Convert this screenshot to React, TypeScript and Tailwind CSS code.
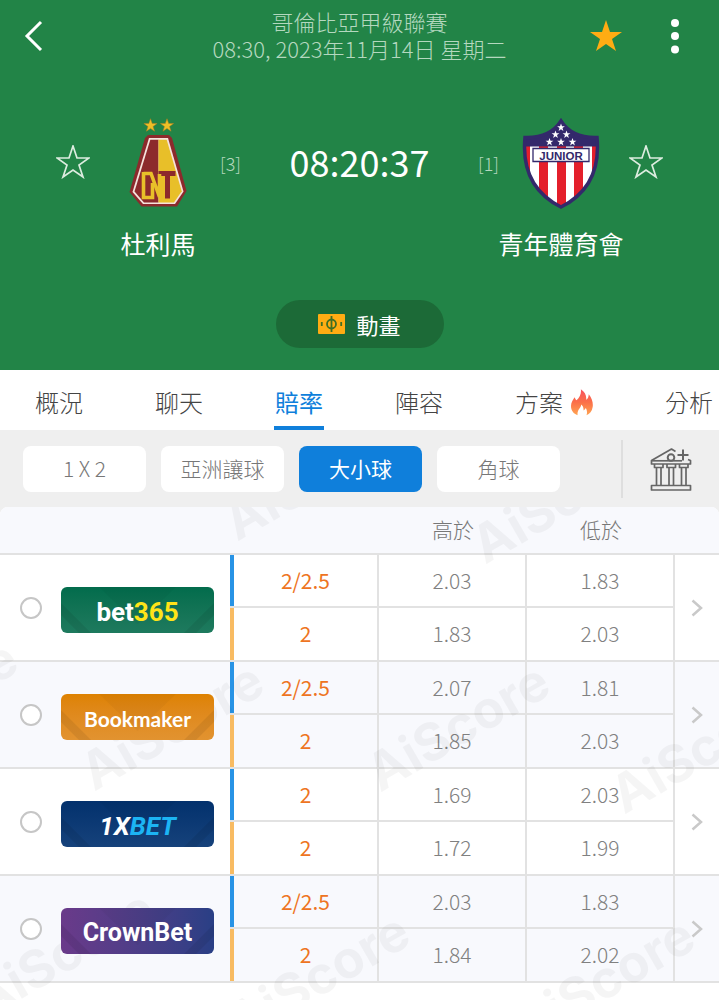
import { useState } from "react";

const STAR = "17,1 21,13 33,13 23,20 27,32 17,25 7,32 11,20 1,13 13,13";
const SMALL_STAR = "0,-4 1,-1.2 3.9,-1.2 1.5,0.6 2.4,3.4 0,1.7 -2.4,3.4 -1.5,0.6 -3.9,-1.2 -1,-1.2";

type Line = { spread: string; over: string; under: string };
type Bookmaker = { id: string; name: string; badge: string; lines: [Line, Line] };

const bookmakers: Bookmaker[] = [
  {
    id: "bet365",
    name: "bet365",
    badge: "bg-linear-to-b from-[#026c4c] to-[#1e7a5e]",
    lines: [
      { spread: "2/2.5", over: "2.03", under: "1.83" },
      { spread: "2", over: "1.83", under: "2.03" },
    ],
  },
  {
    id: "bookmaker",
    name: "Bookmaker",
    badge: "bg-linear-to-b from-[#de8200] to-[#e29330]",
    lines: [
      { spread: "2/2.5", over: "2.07", under: "1.81" },
      { spread: "2", over: "1.85", under: "2.03" },
    ],
  },
  {
    id: "1xbet",
    name: "1XBET",
    badge: "bg-linear-to-b from-[#03316d] to-[#16427b]",
    lines: [
      { spread: "2", over: "1.69", under: "2.03" },
      { spread: "2", over: "1.72", under: "1.99" },
    ],
  },
  {
    id: "crownbet",
    name: "CrownBet",
    badge: "bg-linear-to-r from-[#6a3a8a] to-[#293f85]",
    lines: [
      { spread: "2/2.5", over: "2.03", under: "1.83" },
      { spread: "2", over: "1.84", under: "2.02" },
    ],
  },
];

const tabs = ["概況", "聊天", "賠率", "陣容", "方案", "分析"];
const markets = ["1 X 2", "亞洲讓球", "大小球", "角球"];

const watermarks = [
  "left-[315px] top-[-31px]",
  "left-[563px] top-[-8px]",
  "left-[-74px] top-[197px]",
  "left-[172px] top-[219px]",
  "left-[458px] top-[220px]",
  "left-[702px] top-[242px]",
  "left-[63px] top-[447px]",
  "left-[318px] top-[470px]",
  "left-[603px] top-[474px]",
];

function FavouriteStar({ label }: { label: string }) {
  return (
    <button type="button" aria-label={label} className="mt-7 size-[34px] shrink-0">
      <svg viewBox="0 0 34 34" className="size-full" fill="none" stroke="#dcecdf" strokeWidth="1.7">
        <polygon points={STAR} />
      </svg>
    </button>
  );
}

function TolimaCrest() {
  return (
    <svg viewBox="0 0 60 92" className="h-[92px] w-[60px]" aria-hidden="true">
      <g fill="#eebf26" stroke="#b07a22" strokeWidth="0.3">
        <polygon transform="translate(22.5 8.5) scale(1.7)" points={SMALL_STAR} />
        <polygon transform="translate(39 8.5) scale(1.7)" points={SMALL_STAR} />
      </g>
      <path d="M20 18h21l3 3 14.5 53L49 89.500H13.500L1.500 75 17 21z" fill="#8c2a2c" />
      <path d="M21 21h19l15.500 53.500L47 87H15L4.500 75z" fill="#f6e3dc" />
      <path d="M22.300 22.700H30.500V85.5H16L6.500 74.500z" fill="#8c2a2c" />
      <path d="M30.500 22.700h8.200L53.700 74.300 46 85.500H30.500z" fill="#e8bf29" />
      <path d="M30.500 54H47.5V59H42V81.5H37V59H30.500z" fill="#8c2a2c" />
      <path d="M15.500 56.500H23L31.500 80V57" fill="none" stroke="#e8bf29" strokeWidth="3.600" />
      <path d="M15.500 55V80.500H24.500V66" fill="none" stroke="#e8bf29" strokeWidth="3.600" />
    </svg>
  );
}

function JuniorCrest() {
  const shield = "M40 4C47 15 60 21 76 20.500C79 52 68 76 40 90C12 76 1 52 4 20.500C20 21 33 15 40 4Z";
  return (
    <svg viewBox="0 0 80 92" className="h-[92px] w-20" aria-hidden="true">
      <defs>
        <clipPath id="junior-shield">
          <path d={shield} />
        </clipPath>
      </defs>
      <g clipPath="url(#junior-shield)">
        <path d="M0 0h80v92H0z" fill="#fff" />
        <path d="M0 29h9v63H0zM18 29h9v63h-9zM36 29h9v63h-9zM53 29h9v63h-9zM71 29h9v63h-9z" fill="#e41f2b" />
        <path d="M0 0h80v29.500H0z" fill="#33296b" />
      </g>
      <path d={shield} fill="none" stroke="#33296b" strokeWidth="3.5" />
      <path d="M12 31.500h56v13H12z" fill="#fff" stroke="#33296b" strokeWidth="1.3" />
      <text x="40" y="42.500" textAnchor="middle" fontSize="11.5" fontWeight="700" fill="#33296b" fontFamily="Liberation Sans, sans-serif">
        JUNIOR
      </text>
      <g fill="#fff">
        {[[40, 10.5], [34.5, 17.5], [45.5, 17.5], [28.5, 25], [40, 25], [51.5, 25]].map(([x, y]) => (
          <polygon key={`${x}-${y}`} transform={`translate(${x} ${y})`} points={SMALL_STAR} />
        ))}
      </g>
    </svg>
  );
}

function PitchIcon() {
  return (
    <svg viewBox="0 0 27 20" className="h-5 w-[27px]" aria-hidden="true">
      <rect width="27" height="20" rx="1" fill="#ffac13" />
      <g fill="none" stroke="#3f6f24" strokeWidth="1.800">
        <circle cx="13.500" cy="10" r="4.500" />
        <path d="M13.500 2v16M3.800 8v4M23.200 8v4" />
      </g>
    </svg>
  );
}

function FlameIcon() {
  return (
    <svg viewBox="0 0 67 80" className="h-[27px] w-[22px]" aria-hidden="true">
      <defs>
        <linearGradient id="flame" x1="0" y1="0" x2="0" y2="1">
          <stop offset="0" stopColor="#f8515f" />
          <stop offset="0.500" stopColor="#fb7049" />
          <stop offset="1" stopColor="#ffa552" />
        </linearGradient>
      </defs>
      <path
        fill="url(#flame)"
        d="M30 0C43 8 48 21 46 32C51 29 54 23 54 15C64 27 68 42 66 54C64 67 57 76 47 79C50 72 49 63 45 57C43 61 41 63 38 64C39 56 36 50 31 46C31 57 18 61 20 79C8 75 0 65 0 51C0 40 6 32 11 24C13 28 14 31 17 33C27 25 32 12 30 0Z"
      />
    </svg>
  );
}

function BankIcon() {
  return (
    <svg viewBox="0 0 42 44" className="h-11 w-[42px]" fill="none" stroke="#666" strokeWidth="1.700" strokeLinejoin="round" aria-hidden="true">
      <path d="M25.500 4.500L21.500 2 1.500 13.500V17h39v-3.500L38 12.500" />
      <path d="M1.500 13.800H32" />
      <circle cx="21" cy="10.500" r="3.300" strokeWidth="2" />
      <path d="M33 2.500v11M27.500 8h11" strokeWidth="2" />
      <path d="M1.500 38.500h39v4.500h-39zM4.500 17v3.500h8.500V17M17 17v3.500h8.500V17M29.500 17v3.500H38V17M6.500 20.500v18M11 20.500v18M19 20.500v18M23.500 20.500v18M31.500 20.500v18M36 20.500v18" />
    </svg>
  );
}

function BadgeLabel({ id }: { id: string }) {
  switch (id) {
    case "bet365":
      return (
        <span className="font-[Roboto] text-[26px] font-bold">
          bet<span className="text-[#ffe418]">365</span>
        </span>
      );
    case "bookmaker":
      return <span className="font-[Lato] text-[21px] font-bold">Bookmaker</span>;
    case "1xbet":
      return (
        <span className="font-[Roboto] text-[26px] font-bold italic">
          1X<span className="text-[#1cb4f4]">BET</span>
        </span>
      );
    default:
      return <span className="font-[Roboto] text-[25px] font-bold">CrownBet</span>;
  }
}

function OddsRows({
  item,
  shaded,
  selected,
  onSelect,
}: {
  item: Bookmaker;
  shaded: boolean;
  selected: boolean;
  onSelect: () => void;
}) {
  const line = "border-[#e2e2e2]";
  return (
    <tbody className={shaded ? "bg-[#f8f9fd]" : "bg-white"}>
      {item.lines.map((odds, i) => (
        <tr key={i} className={i === 0 ? "h-[53px]" : "h-[54px]"}>
          {i === 0 && (
            <td rowSpan={2} className={`border-b-2 ${line} p-0`}>
              <label className="relative z-10 flex items-center pl-5">
                <input
                  type="radio"
                  name="bookmaker"
                  checked={selected}
                  onChange={onSelect}
                  className="size-[22px] shrink-0 appearance-none rounded-full border-2 border-[#c6c6c6] bg-white checked:border-[#0f7fdb]"
                />
                <span className={`relative mt-1 ml-[19px] flex h-[46px] w-[153px] items-center justify-center overflow-hidden rounded-md pt-1 leading-none text-white ${item.badge}`}>
                  <svg viewBox="0 0 153 46" className="absolute inset-0 size-full" aria-hidden="true">
                    <path d="M0 16l30 30H18L0 28zM153 16l-30 30h12l18-18z" fill="#000" opacity="0.070" />
                    <path d="M38 0h77L76.500 37z" fill="#000" opacity="0.030" />
                  </svg>
                  <span className="relative">
                    <BadgeLabel id={item.id} />
                  </span>
                </span>
              </label>
            </td>
          )}
          <td className={`border-r-2 border-b-2 ${line} p-0 font-normal text-[#ee7422]`}>
            <div className={`flex items-center border-l-4 ${i === 0 ? "h-[51px] border-[#2893e5]" : "h-[52px] border-[#f8bb62]"}`}>
              <span className="flex-1 text-center">{odds.spread}</span>
            </div>
          </td>
          <td className={`border-r-2 border-b-2 ${line} p-0 text-center text-[#808080]`}>{odds.over}</td>
          <td className={`border-r-2 border-b-2 ${line} p-0 text-center text-[#808080]`}>{odds.under}</td>
          {i === 0 && (
            <td rowSpan={2} className={`border-b-2 ${line} p-0`}>
              <button type="button" aria-label={`${item.name} 詳情`} className="relative z-10 flex w-full justify-center py-4">
                <svg viewBox="0 0 12 18" className="h-[18px] w-3" fill="none" stroke="#c9c9c9" strokeWidth="2.500" aria-hidden="true">
                  <path d="M1.500 1.500L10 9l-8.500 7.500" />
                </svg>
              </button>
            </td>
          )}
        </tr>
      ))}
    </tbody>
  );
}

export default function App() {
  const [tab, setTab] = useState("賠率");
  const [market, setMarket] = useState("大小球");
  const [selected, setSelected] = useState("");

  return (
    <div className="flex min-h-screen flex-col overflow-x-hidden bg-white font-['Noto_Sans_CJK_TC',sans-serif] font-light">
      <header className="flex flex-col items-center bg-[#228447] pb-[22px] text-white">
        <div className="flex w-full items-start justify-between px-6">
          <div className="flex w-[110px] pt-[19px]">
            <button type="button" aria-label="返回">
              <svg viewBox="0 0 20 34" className="h-[34px] w-5" fill="none" stroke="#fff" strokeWidth="3" aria-hidden="true">
                <path d="M17 3L3 17l14 14" />
              </svg>
            </button>
          </div>
          <div className="pt-2 text-center text-[22px] leading-[27px] text-[#b4d8bf]">
            <h1>哥倫比亞甲級聯賽</h1>
            <p>08:30, 2023年11月14日 星期二</p>
          </div>
          <div className="flex w-[110px] items-start justify-end gap-11 pt-[19px] pr-3">
            <button type="button" aria-label="收藏賽事" className="size-[34px]">
              <svg viewBox="0 0 34 34" className="size-full" fill="#ffac13" aria-hidden="true">
                <polygon points={STAR} />
              </svg>
            </button>
            <button type="button" aria-label="更多">
              <svg viewBox="0 0 16 36" className="h-9 w-4" fill="#fff" aria-hidden="true">
                <circle cx="8" cy="4" r="4" />
                <circle cx="8" cy="17" r="4" />
                <circle cx="8" cy="30.500" r="4" />
              </svg>
            </button>
          </div>
        </div>

        <div className="mt-[55px] flex w-full items-start justify-between px-14">
          <div className="flex">
            <FavouriteStar label="收藏杜利馬" />
            <div className="ml-1.5 flex w-[124px] flex-col items-center">
              <TolimaCrest />
              <h2 className="mt-4 text-[25px] leading-9 font-normal whitespace-nowrap">杜利馬</h2>
            </div>
            <span className="mt-8 w-[21px] text-center text-lg text-[#b5d8bf]">[3]</span>
          </div>
          <time className="mt-[18px] text-[36px] leading-[52px] font-normal">08:20:37</time>
          <div className="flex">
            <span className="mt-8 w-[21px] text-center text-lg text-[#b5d8bf]">[1]</span>
            <div className="mr-1.5 flex w-[124px] flex-col items-center">
              <JuniorCrest />
              <h2 className="mt-4 text-[25px] leading-9 font-normal whitespace-nowrap">青年體育會</h2>
            </div>
            <FavouriteStar label="收藏青年體育會" />
          </div>
        </div>

        <button type="button" className="mt-[39px] flex h-12 w-[168px] items-center justify-center gap-[11px] rounded-full bg-[#1c6a37] text-[22px] font-normal">
          <PitchIcon />
          動畫
        </button>
      </header>

      <nav className="flex h-[60px] shrink-0 items-stretch gap-[72px] bg-white pl-[35px] text-2xl">
        {tabs.map((name) => (
          <button
            key={name}
            type="button"
            onClick={() => setTab(name)}
            className={`relative flex shrink-0 items-center gap-2 pt-1 ${name === tab ? "font-normal text-[#0f7fdb]" : "text-[#444]"}`}
          >
            {name}
            {name === "方案" && <FlameIcon />}
            {name === tab && <span className="absolute inset-x-[-1px] bottom-0 h-1 bg-[#0f7fdb]" />}
          </button>
        ))}
      </nav>

      <div className="flex h-[77px] shrink-0 items-center justify-between bg-[#efefef] pr-[27px] pl-[23px]">
        <div className="flex gap-[15px] text-[21px]">
          {markets.map((name) => (
            <button
              key={name}
              type="button"
              onClick={() => setMarket(name)}
              className={`h-[46px] w-[123px] rounded-lg ${name === market ? "bg-[#0f7fdb] font-normal text-white" : "bg-white text-[#777]"}`}
            >
              {name}
            </button>
          ))}
        </div>
        <button type="button" aria-label="博彩公司" className="flex h-[58px] items-center border-l-2 border-[#dedede] pl-[27px]">
          <BankIcon />
        </button>
      </div>

      <main className="relative flex flex-1 flex-col overflow-hidden bg-[#efefef]">
        <div className="flex-1 rounded-t-lg bg-white">
          <table className="w-full table-fixed border-separate border-spacing-0 text-[21px]">
            <colgroup>
              <col className="w-[32%]" />
              <col className="w-[20.7%]" />
              <col className="w-[20.6%]" />
              <col className="w-[20.6%]" />
              <col className="w-[6.1%]" />
            </colgroup>
            <thead>
              <tr className="h-12 text-[#777]">
                <td className="rounded-tl-lg border-b-2 border-[#e2e2e2] bg-[#f8f9fd] p-0" />
                <td className="border-b-2 border-[#e2e2e2] bg-[#f8f9fd] p-0" />
                <th className="border-b-2 border-[#e2e2e2] bg-[#f8f9fd] p-0 font-light">高於</th>
                <th className="border-b-2 border-[#e2e2e2] bg-[#f8f9fd] p-0 font-light">低於</th>
                <td className="rounded-tr-lg border-b-2 border-[#e2e2e2] bg-[#f8f9fd] p-0" />
              </tr>
            </thead>
            {bookmakers.map((item, i) => (
              <OddsRows
                key={item.id}
                item={item}
                shaded={i % 2 === 1}
                selected={selected === item.id}
                onSelect={() => setSelected(item.id)}
              />
            ))}
          </table>
        </div>
        <div className="pointer-events-none absolute inset-0 font-[Inter] text-[52px] leading-none font-bold text-black/4 select-none" aria-hidden="true">
          {watermarks.map((place) => (
            <span key={place} className={`absolute ${place} -translate-x-1/2 -translate-y-1/2 -rotate-30`}>
              AiScore
            </span>
          ))}
        </div>
      </main>
    </div>
  );
}
